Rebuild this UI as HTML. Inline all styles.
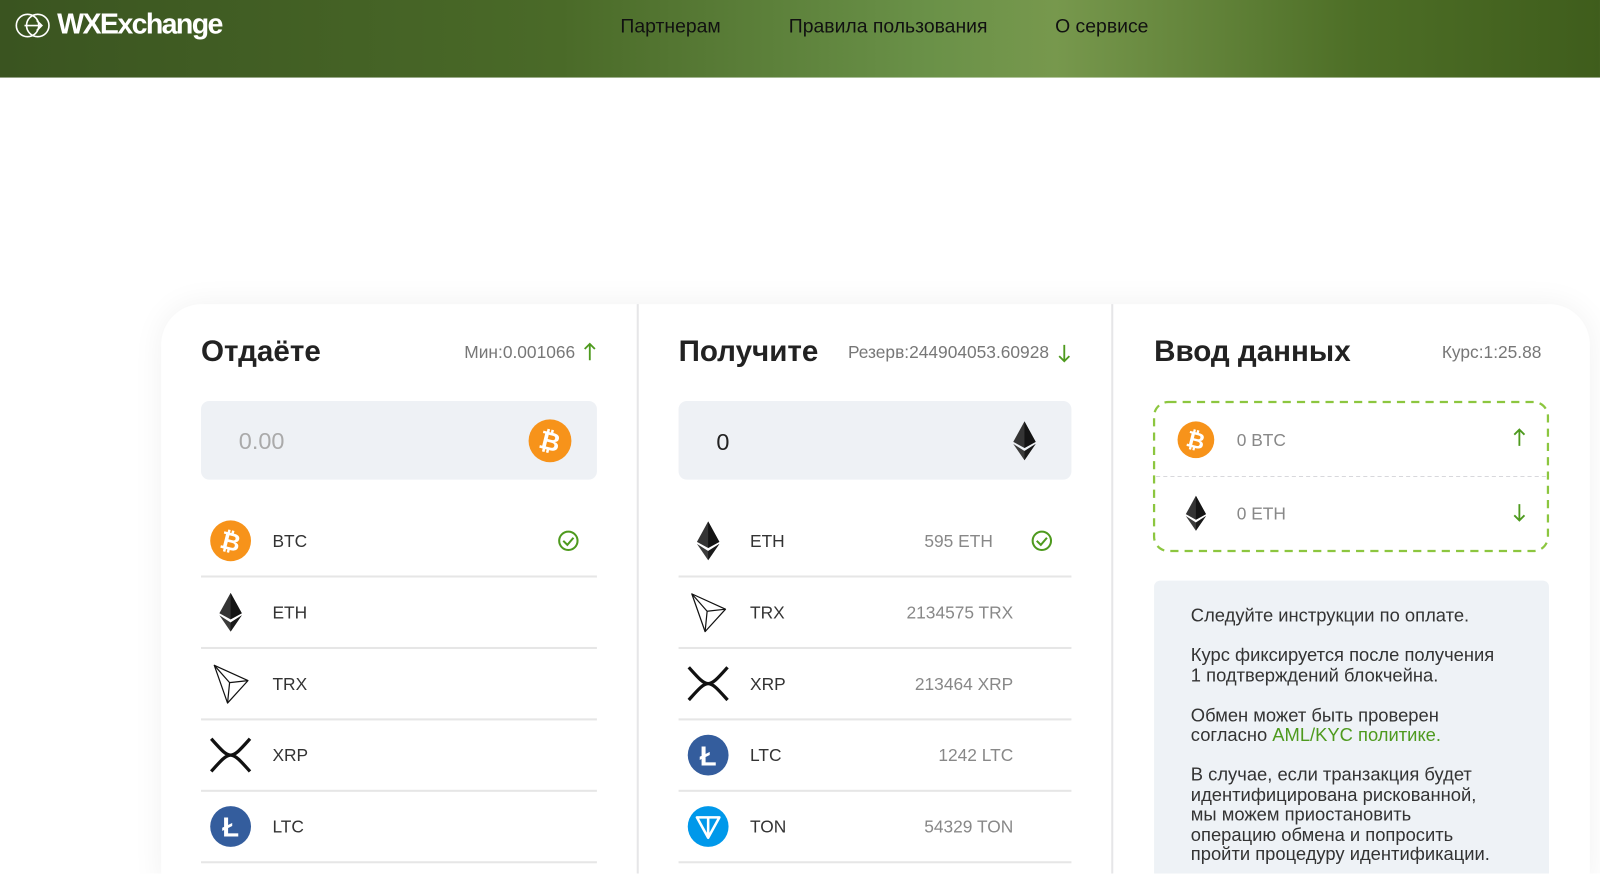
<!DOCTYPE html>
<html><head><meta charset="utf-8"><style>
*{margin:0;padding:0;box-sizing:border-box}
html,body{width:1600px;height:874px;overflow:hidden}
body{background:#fff;font-family:"Liberation Sans",Arial,sans-serif;position:relative}
#w{position:absolute;left:0;top:0;width:1568px;height:856px;overflow:hidden;transform:scale(1.0204);transform-origin:0 0}
.hdr{position:absolute;left:0;top:0;width:1568px;height:76px;background:linear-gradient(90deg,#3a5420 0%,#4a6a28 35%,#6a9148 58%,#77984d 66%,#4d6e26 85%,#3f5d1c 100%)}
.logo{position:absolute;left:56px;top:8px;color:#fff;font-weight:bold;font-size:28px;letter-spacing:-1.6px;font-family:"Liberation Sans Narrow","Liberation Sans",sans-serif}
.nav{position:absolute;top:16px;color:#111;font-size:19px}
.a{position:absolute}
.card{position:absolute;left:158px;top:298px;width:1400px;height:570px;background:#fff;border-radius:40px 40px 0 0;box-shadow:0 0 30px rgba(0,0,0,.06)}
.vl{position:absolute;top:298px;width:2px;height:560px;background:#e6e6e8}
.t{position:absolute;font-weight:bold;font-size:29px;color:#222;top:329px}
.s{position:absolute;font-size:17px;color:#777;top:336px}
.box{position:absolute;top:393px;height:77px;background:#eef1f5;border-radius:8px}
.hl{position:absolute;height:2px;background:#e6e6e6}
.lbl{position:absolute;font-size:17px;color:#333}
.amt{position:absolute;font-size:17px;color:#888;text-align:right;width:200px}
.info{position:absolute;left:1131px;top:569px;width:387px;height:300px;background:#eef2f6;border-radius:6px;padding:25px 52px 0 36px;font-size:18px;color:#333;line-height:19.5px}
.info p{margin-bottom:19.5px}
</style></head><body><div id="w">
<svg width="0" height="0" style="position:absolute"><defs>
<g id="eth"><polygon points="0,-19 -11,1 0,7 11,1" fill="#343434"/><polygon points="0,-19 0,7 11,1" fill="#141414"/><polygon points="-11,3 0,10 11,3 0,19" fill="#3c3c3b"/><polygon points="0,10 11,3 0,19" fill="#1a1a1a"/></g>
<g id="trx" fill="none" stroke="#111" stroke-width="1.2" stroke-linejoin="round"><polygon points="-16,-18 17,-3 -3,19"/><path d="M-16,-18 L-1,-1 L-3,19 M-1,-1 L17,-3"/></g>
<g id="xrp" fill="none" stroke="#111" stroke-width="3.2"><path d="M-19,-16 C-10,-6 -5,0 0,0 C5,0 10,-6 19,-16 M-19,16 C-10,6 -5,0 0,0 C5,0 10,6 19,16"/></g>
<g id="up" fill="none" stroke="#4e9a1e" stroke-width="1.8"><path d="M0,8 V-8 M-5,-3 L0,-8 L5,-3"/></g>
<g id="dn" fill="none" stroke="#4e9a1e" stroke-width="1.8"><path d="M0,-8 V8 M-5,3 L0,8 L5,3"/></g>
</defs></svg>
<div class="hdr">
<svg class="a" style="left:15px;top:12px" width="36" height="26" viewBox="0 0 36 26" fill="none" stroke="#fff" stroke-width="1.6"><circle cx="12" cy="13" r="11"/><circle cx="22" cy="13" r="11"/><path d="M9 13h17M21 8l5 5-5 5"/></svg>
<div class="logo">WXExchange</div>
<div class="nav" style="left:608px">Партнерам</div>
<div class="nav" style="left:773px">Правила пользования</div>
<div class="nav" style="left:1034px">О сервисе</div>
</div>
<div class="card"></div>
<div class="vl" style="left:624px"></div><div class="vl" style="left:1089px"></div>

<div class="t" style="left:197px">Отдаёте</div>
<div class="s" style="left:455px">Мин:0.001066</div>
<div class="t" style="left:665px">Получите</div>
<div class="s" style="left:831px">Резерв:244904053.60928</div>
<div class="t" style="left:1131px">Ввод данных</div>
<div class="s" style="left:1413px">Курс:1:25.88</div>

<div class="box" style="left:197px;width:388px"></div>
<div class="a" style="left:234px;top:419px;font-size:23px;color:#aaa">0.00</div>
<div class="box" style="left:665px;width:385px"></div>
<div class="a" style="left:702px;top:420px;font-size:23px;color:#222">0</div>

<svg class="a" style="left:0;top:0" width="1568" height="856">
<g font-family="Liberation Sans" font-weight="bold" fill="#fff" text-anchor="middle">
<circle cx="539" cy="432" r="21" fill="#f7931a"/><text x="539" y="441" font-size="25" transform="rotate(14 539 432)">₿</text>
<circle cx="226" cy="530" r="20" fill="#f7931a"/><text x="226" y="539" font-size="24" transform="rotate(14 226 530)">₿</text>
<circle cx="1172" cy="431" r="18" fill="#f7931a"/><text x="1172" y="439" font-size="22" transform="rotate(14 1172 431)">₿</text>
<circle cx="226" cy="810" r="20" fill="#345d9d"/><text x="226" y="820" font-size="27">Ł</text>
<circle cx="694" cy="740" r="20" fill="#345d9d"/><text x="694" y="750" font-size="27">Ł</text>
<circle cx="694" cy="810" r="20" fill="#0098ea"/>
</g>
<path d="M683 801h22l-11 20z M694 801v20" fill="none" stroke="#fff" stroke-width="2.5" stroke-linejoin="round"/>
<use href="#eth" x="1004" y="432"/>
<use href="#eth" x="226" y="600"/><use href="#trx" x="226" y="670"/><use href="#xrp" x="226" y="740"/>
<use href="#eth" x="694" y="530"/><use href="#trx" x="694" y="600"/><use href="#xrp" x="694" y="670"/>
<g transform="translate(1172 503) scale(.9)"><use href="#eth"/></g>
<use href="#up" x="578" y="345"/><use href="#dn" x="1043" y="346"/>
<use href="#up" x="1489" y="429"/><use href="#dn" x="1489" y="502"/>
<g fill="none" stroke="#4e9a1e" stroke-width="2"><circle cx="557" cy="530" r="9"/><path d="M552 530l4 4 6-7"/><circle cx="1021" cy="530" r="9"/><path d="M1016 530l4 4 6-7"/></g>
<rect x="1131" y="394" width="386" height="146" rx="14" fill="none" stroke="#8cc63f" stroke-width="2.2" stroke-dasharray="8 6"/>
<line x1="1133" y1="467" x2="1515" y2="467" stroke="#d8d8dc" stroke-dasharray="4 3"/>
</svg>
<div class="lbl" style="left:1212px;top:422px;color:#888">0 BTC</div>
<div class="lbl" style="left:1212px;top:494px;color:#888">0 ETH</div>

<div class="hl" style="left:197px;top:564px;width:388px"></div><div class="hl" style="left:197px;top:634px;width:388px"></div><div class="hl" style="left:197px;top:704px;width:388px"></div><div class="hl" style="left:197px;top:774px;width:388px"></div><div class="hl" style="left:197px;top:844px;width:388px"></div>
<div class="hl" style="left:665px;top:564px;width:385px"></div><div class="hl" style="left:665px;top:634px;width:385px"></div><div class="hl" style="left:665px;top:704px;width:385px"></div><div class="hl" style="left:665px;top:774px;width:385px"></div><div class="hl" style="left:665px;top:844px;width:385px"></div>

<div class="lbl" style="left:267px;top:521px">BTC</div><div class="lbl" style="left:267px;top:591px">ETH</div><div class="lbl" style="left:267px;top:661px">TRX</div><div class="lbl" style="left:267px;top:731px">XRP</div><div class="lbl" style="left:267px;top:801px">LTC</div>
<div class="lbl" style="left:735px;top:521px">ETH</div><div class="lbl" style="left:735px;top:591px">TRX</div><div class="lbl" style="left:735px;top:661px">XRP</div><div class="lbl" style="left:735px;top:731px">LTC</div><div class="lbl" style="left:735px;top:801px">TON</div>
<div class="amt" style="left:773px;top:521px">595 ETH</div><div class="amt" style="left:793px;top:591px">2134575 TRX</div><div class="amt" style="left:793px;top:661px">213464 XRP</div><div class="amt" style="left:793px;top:731px">1242 LTC</div><div class="amt" style="left:793px;top:801px">54329 TON</div>

<div class="info">
<p>Следуйте инструкции по оплате.</p>
<p>Курс фиксируется после получения 1&nbsp;подтверждений блокчейна.</p>
<p>Обмен может быть проверен согласно <span style="color:#4e9a1e">AML/KYC политике.</span></p>
<p>В случае, если транзакция будет идентифицирована рискованной, мы можем приостановить операцию обмена и попросить пройти процедуру идентификации.</p>
</div>
</div></body></html>
